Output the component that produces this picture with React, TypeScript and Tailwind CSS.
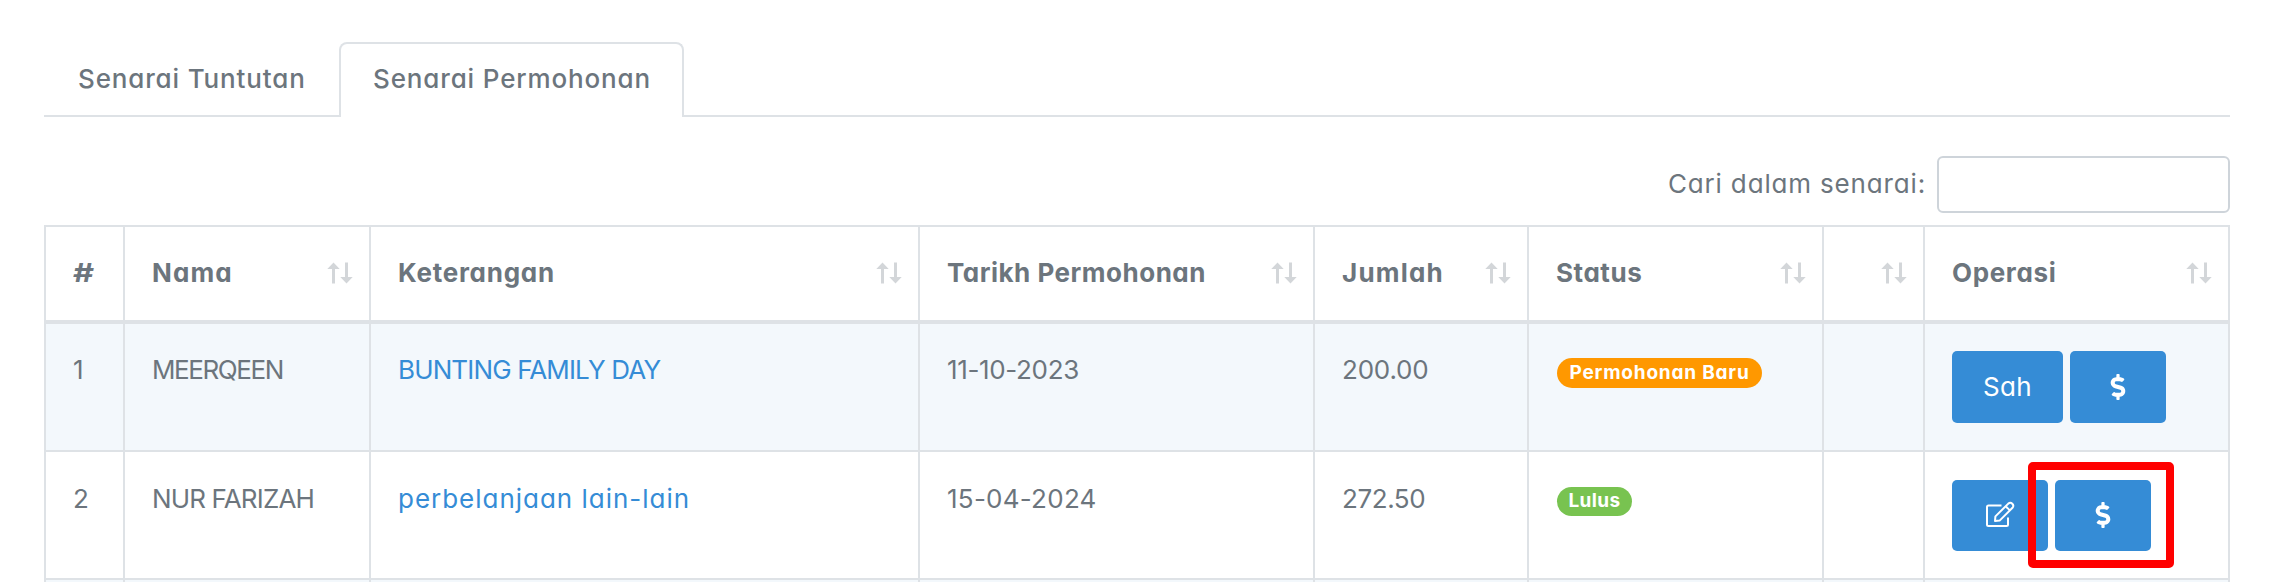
import type { ReactNode } from "react";
import { FaDollarSign } from "react-icons/fa";

function SortArrows() {
  return (
    <svg className="ml-auto mt-[9px] h-[22px] w-[26px] shrink-0 fill-[#d3d6d9]" viewBox="0 0 26 22">
      <path d="M6.5 0.5 L12.7 7 H8 V21.5 H5 V7 H0.3 Z" />
      <path d="M19.5 21.5 L25.7 15 H21 V0.5 H18 V15 H13.3 Z" />
    </svg>
  );
}

function EditIcon() {
  return (
    <svg className="mb-[2px] h-[27px] w-[30px]" viewBox="0 0 30 27" fill="none" stroke="currentColor" strokeWidth="2" strokeLinejoin="round">
      <path d="M16.5 4.5 H3.5 Q2 4.5 2 6 V23.5 Q2 25 3.5 25 H21.5 Q23 25 23 23.5 V16.5" />
      <path d="M10 20 L10.4 15.4 L23.3 2.6 Q25.4 0.9 27.3 2.8 Q29.2 4.7 27.5 6.8 L14.6 19.6 Z" />
      <path d="M20.6 5.2 L24.9 9.4" />
    </svg>
  );
}

function HeaderCell({ label, tracking, sortable = true }: { label: string; tracking: string; sortable?: boolean }) {
  return (
    <th className="border-t-2 border-b-4 border-l-2 border-[#dee2e6] pt-[26px] pr-4 pl-[27px] text-left align-top font-bold last:border-r-2">
      <div className="flex items-start">
        <span className={`whitespace-nowrap leading-10 ${tracking}`}>{label}</span>
        {sortable && <SortArrows />}
      </div>
    </th>
  );
}

function Cell({ children }: { children?: ReactNode }) {
  return (
    <td className="border-b-2 border-l-2 border-[#dee2e6] pt-[26px] pl-[27px] align-top leading-10 whitespace-nowrap last:border-r-2">
      {children}
    </td>
  );
}

function ActionButton({ children, className }: { children: ReactNode; className: string }) {
  return (
    <button className={`flex items-center justify-center rounded-[5px] bg-[#358cd6] text-white ${className}`}>
      {children}
    </button>
  );
}

export default function App() {
  return (
    <div className="h-[582px] w-[2278px] overflow-hidden bg-white px-[44px] pr-[48px] pt-[42px] font-['Inter',sans-serif] text-[26px] text-[#6c757d] [font-feature-settings:'cv11']">
      <nav className="flex h-[75px] border-b-2 border-[#dee2e6] font-medium leading-10">
        <a className="w-[295px] pt-[17px] pl-[34px] tracking-[0.85px] whitespace-nowrap">Senarai Tuntutan</a>
        <a className="h-[75px] w-[345px] rounded-t-lg border-2 border-b-0 border-[#dee2e6] bg-white pt-[15px] pl-[32px] tracking-[0.86px] whitespace-nowrap">
          Senarai Permohonan
        </a>
      </nav>

      <div className="mt-[39px] flex h-[57px] items-center justify-end">
        <label className="mr-[11px] pb-[2px] leading-10 tracking-[0.84px]">Cari dalam senarai:</label>
        <input className="h-[57px] w-[293px] rounded-md border-2 border-[#ced4da] outline-none" />
      </div>

      <table className="mt-3 w-[2186px] table-fixed border-separate border-spacing-0">
        <colgroup>
          <col className="w-[79px]" />
          <col className="w-[246px]" />
          <col className="w-[549px]" />
          <col className="w-[395px]" />
          <col className="w-[214px]" />
          <col className="w-[295px]" />
          <col className="w-[101px]" />
          <col className="w-[307px]" />
        </colgroup>
        <thead>
          <tr className="h-[99px]">
            <HeaderCell label="#" tracking="inline-block origin-left scale-x-[1.25]" sortable={false} />
            <HeaderCell label="Nama" tracking="tracking-[1.1px]" />
            <HeaderCell label="Keterangan" tracking="tracking-[0.75px]" />
            <HeaderCell label="Tarikh Permohonan" tracking="tracking-[0.5px]" />
            <HeaderCell label="Jumlah" tracking="tracking-[1.2px]" />
            <HeaderCell label="Status" tracking="tracking-[0.55px]" />
            <HeaderCell label="" tracking="" />
            <HeaderCell label="Operasi" tracking="tracking-[0.65px]" />
          </tr>
        </thead>
        <tbody>
          <tr className="h-[128px] bg-[#f3f8fc]">
            <Cell>1</Cell>
            <Cell><span className="tracking-[-1.4px]">MEERQEEN</span></Cell>
            <Cell><a className="tracking-[-0.86px] text-[#358cd6]">BUNTING FAMILY DAY</a></Cell>
            <Cell><span className="tracking-[-0.35px]">11-10-2023</span></Cell>
            <Cell><span className="tracking-[-0.2px]">200.00</span></Cell>
            <Cell>
              <span className="mt-2 ml-px flex h-[30px] w-[205px] items-center justify-center rounded-full bg-[#ff9800] pb-px text-[19px] font-bold tracking-[0.8px] text-white">
                Permohonan Baru
              </span>
            </Cell>
            <Cell />
            <Cell>
              <div className="mt-px flex gap-[7px]">
                <ActionButton className="h-[72px] w-[111px] tracking-[0.3px]">Sah</ActionButton>
                <ActionButton className="h-[72px] w-[96px]"><FaDollarSign className="size-[26px]" /></ActionButton>
              </div>
            </Cell>
          </tr>
          <tr className="h-[128px]">
            <Cell><div className="mt-px">2</div></Cell>
            <Cell><div className="mt-px tracking-[-0.84px]">NUR FARIZAH</div></Cell>
            <Cell><div className="mt-px"><a className="tracking-[0.98px] text-[#358cd6]">perbelanjaan lain-lain</a></div></Cell>
            <Cell><div className="mt-px tracking-[0.25px]">15-04-2024</div></Cell>
            <Cell><div className="mt-px tracking-[-0.42px]">272.50</div></Cell>
            <Cell>
              <span className="mt-[9px] ml-px flex h-[29px] w-[75px] items-center justify-center rounded-full bg-[#78c350] pb-px text-[19px] font-bold tracking-[0.4px] text-white">
                Lulus
              </span>
            </Cell>
            <Cell />
            <Cell>
              <div className="relative mt-[2px] flex gap-[7px]">
                <ActionButton className="h-[71px] w-[96px]"><EditIcon /></ActionButton>
                <ActionButton className="h-[71px] w-[96px]"><FaDollarSign className="mb-[2px] size-[26px]" /></ActionButton>
                <div className="absolute top-[-18px] left-[76px] h-[106px] w-[146px] rounded-[5px] border-8 border-[#ff0000]" />
              </div>
            </Cell>
          </tr>
          <tr className="h-[60px] bg-[#f3f8fc]">
            <Cell /><Cell /><Cell /><Cell /><Cell /><Cell /><Cell /><Cell />
          </tr>
        </tbody>
      </table>
    </div>
  );
}
